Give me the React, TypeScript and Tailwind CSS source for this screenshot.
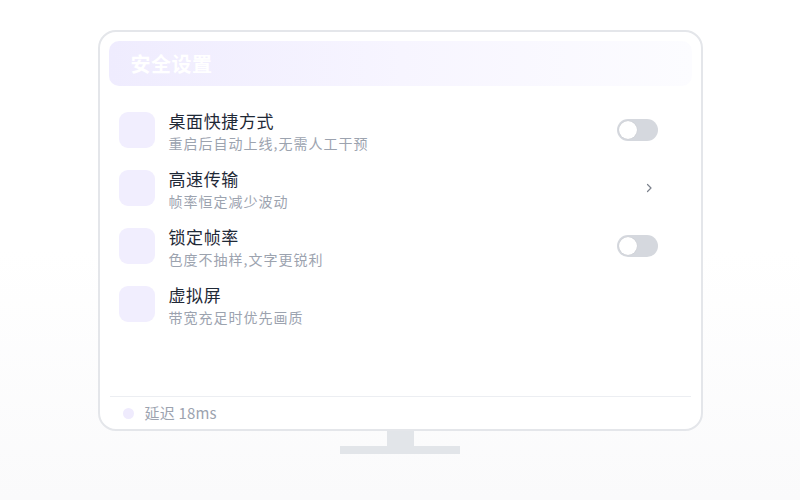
import React from "react";

const font = { fontFamily: '"Noto Sans CJK SC", "Noto Sans", sans-serif' };

function Toggle() {
  return (
    <div className="w-[41px] h-[22px] rounded-full bg-[#d5d8de] p-[2px] flex items-center">
      <div className="w-[18px] h-[18px] rounded-full bg-white shadow-[0_0_1px_rgba(0,0,0,0.15)]" />
    </div>
  );
}

function Chevron() {
  return (
    <svg width="8" height="10" viewBox="0 0 8 10" className="mr-[5px]">
      <path d="M2.5 1.5 L6 5 L2.5 8.5" fill="none" stroke="#7b818c" strokeWidth="1.2" strokeLinecap="round" strokeLinejoin="round" />
    </svg>
  );
}

const rows: { title: string; sub: string; right: "toggle" | "chevron" | null }[] = [
  { title: "桌面快捷方式", sub: "重启后自动上线,无需人工干预", right: "toggle" },
  { title: "高速传输", sub: "帧率恒定减少波动", right: "chevron" },
  { title: "锁定帧率", sub: "色度不抽样,文字更锐利", right: "toggle" },
  { title: "虚拟屏", sub: "带宽充足时优先画质", right: null },
];

export default function App() {
  return (
    <div
      className="w-[800px] h-[500px] bg-gradient-to-b from-white via-white to-[#fafafb] flex flex-col items-center pt-[30px]"
      style={font}
    >
      <div className="w-[605px] h-[401px] border-2 border-[#e4e6ea] rounded-[18px] bg-white flex flex-col px-[9px] pt-[9px]">
        <div className="h-[45px] rounded-[10px] bg-gradient-to-r from-[#efecfe] via-[#f7f5ff] to-[#fcfcff] flex items-center pl-[22px]">
          <span className="text-white text-[20px] font-bold tracking-[0.5px]">安全设置</span>
        </div>
        <div className="flex flex-col mt-[15px] flex-1">
          {rows.map((r) => (
            <div key={r.title} className="h-[58px] flex items-center pl-[10px] pr-[34px]">
              <div className="w-[36px] h-[36px] rounded-[9px] bg-[#f1eefe]" />
              <div className="flex flex-col ml-[14px] pt-[3px] flex-1">
                <span className="text-[17px] leading-[22px] text-[#1f2937] tracking-[0.6px]">{r.title}</span>
                <span className="text-[14px] leading-[22px] text-[#9ca3af] tracking-[1px]">{r.sub}</span>
              </div>
              {r.right === "toggle" && <Toggle />}
              {r.right === "chevron" && <Chevron />}
            </div>
          ))}
        </div>
        <div className="h-px bg-[#eceef2] mx-[1px]" />
        <div className="h-[32px] flex items-center pl-[14px]">
          <div className="w-[11px] h-[11px] rounded-full bg-[#efebfd]" />
          <span className="ml-[11px] text-[15px] text-[#9ca3af] tracking-[0.2px]">延迟 18ms</span>
        </div>
      </div>
      <div className="w-[27px] h-[15px] bg-[#e2e5e9]" />
      <div className="w-[120px] h-[8px] bg-[#e2e5e9]" />
    </div>
  );
}
